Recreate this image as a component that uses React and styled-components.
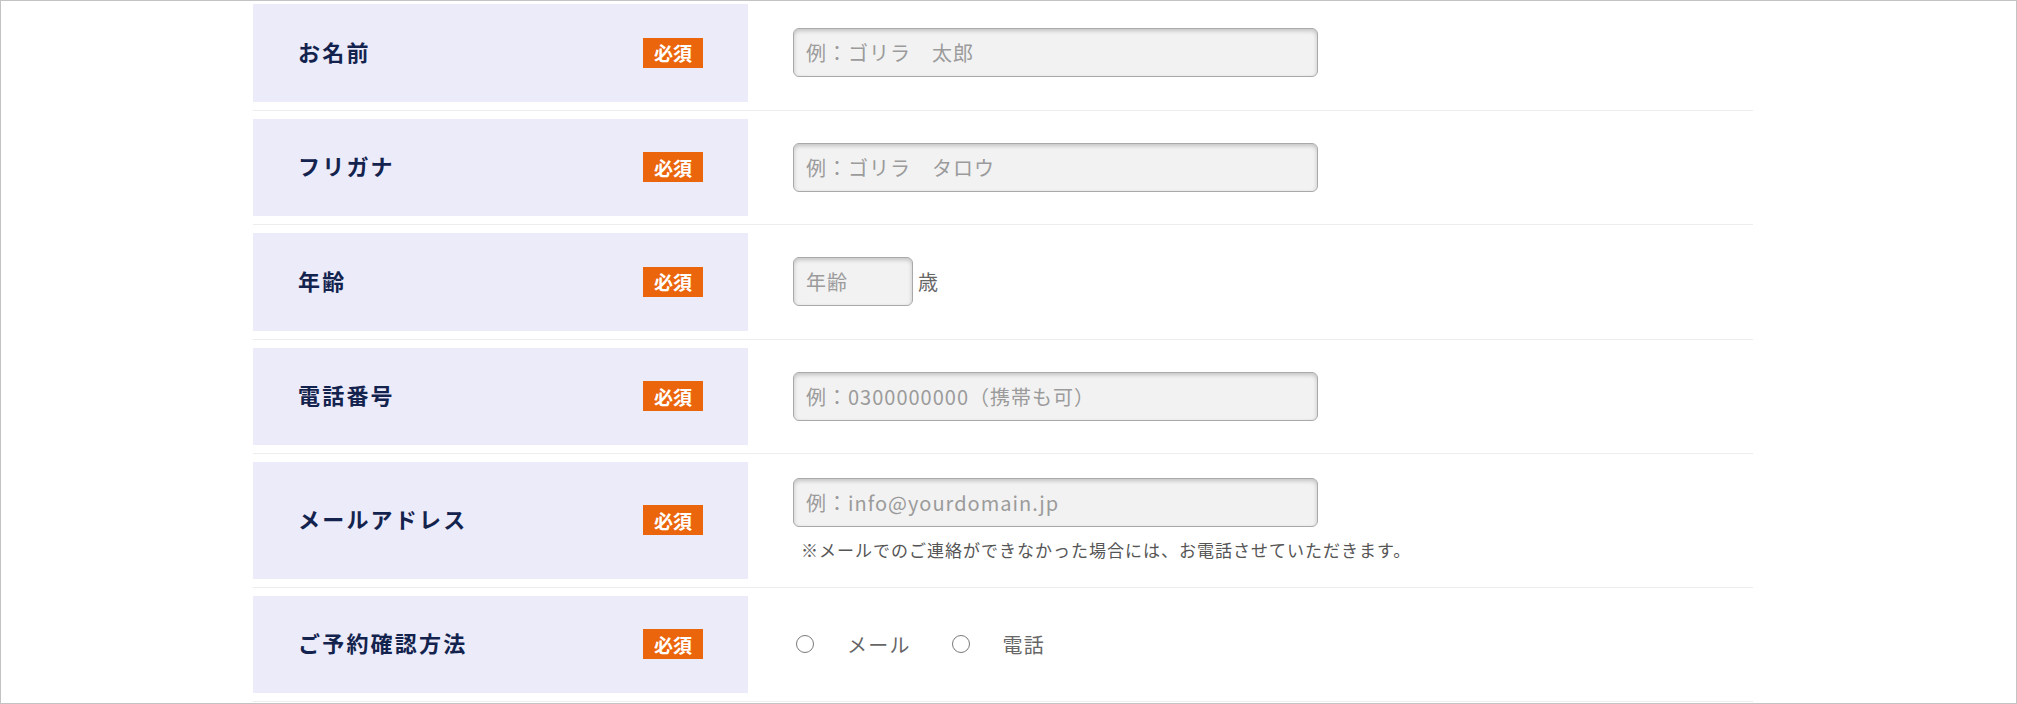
import React from 'react';
import styled, { createGlobalStyle } from 'styled-components';

const GlobalStyle = createGlobalStyle`
  html, body {
    margin: 0;
    padding: 0;
    background: #fff;
  }
  body {
    font-family: "Noto Sans CJK JP", "Noto Sans", sans-serif;
  }
  * {
    box-sizing: border-box;
  }
`;

const fields = [
  { label: 'お名前', placeholder: '例：ゴリラ　太郎' },
  { label: 'フリガナ', placeholder: '例：ゴリラ　タロウ' },
  { label: '年齢', placeholder: '年齢', kind: 'age' },
  { label: '電話番号', placeholder: '例：0300000000（携帯も可）' },
  {
    label: 'メールアドレス',
    placeholder: '例：info@yourdomain.jp',
    note: '※メールでのご連絡ができなかった場合には、お電話させていただきます。',
  },
  { label: 'ご予約確認方法', kind: 'radio', options: ['メール', '電話'] },
];

const ContactForm = () => {
  return (
    <Frame>
      <GlobalStyle />
      <Form>
        {fields.map((f) => (
          <Row key={f.label}>
            <Label>
              <LabelText>{f.label}</LabelText>
              <Required>必須</Required>
            </Label>
            <Field>
              {f.kind === 'age' && (
                <Inline>
                  <TextInput $width={120} placeholder={f.placeholder} />
                  <Unit>歳</Unit>
                </Inline>
              )}
              {f.kind === 'radio' && (
                <Inline>
                  {f.options.map((o) => (
                    <Option key={o}>
                      <Radio type="radio" name="confirm" />
                      {o}
                    </Option>
                  ))}
                </Inline>
              )}
              {!f.kind && <TextInput placeholder={f.placeholder} />}
              {f.note && <Note>{f.note}</Note>}
            </Field>
          </Row>
        ))}
      </Form>
    </Frame>
  );
};

const Frame = styled.div`
  height: 704px;
  border: 1px solid #c3c3c3;
  overflow: hidden;
`;

const Form = styled.dl`
  width: 1500px;
  margin: 0 0 0 252px;
`;

const Row = styled.div`
  display: flex;
  padding: 8px 0;
  border-bottom: 1px solid #ededed;

  &:first-child {
    padding-top: 3px;
  }
`;

const Label = styled.dt`
  width: 495px;
  min-height: 97.5px;
  flex-shrink: 0;
  display: flex;
  align-items: center;
  justify-content: space-between;
  padding: 0 45px;
  background: #ebebfa;
  color: #13234e;
  font-size: 22px;
  font-weight: 700;
  letter-spacing: 0.1em;
`;

const LabelText = styled.span`
  margin-bottom: 4px;
`;

const Required = styled.span`
  display: inline-flex;
  align-items: center;
  justify-content: center;
  width: 60px;
  height: 30px;
  background: #ea650c;
  color: #fff;
  font-size: 19px;
  font-weight: 700;
  letter-spacing: 0;
`;

const Field = styled.dd`
  flex: 1;
  margin: 0;
  padding: 16px 0 16px 45px;
  display: flex;
  flex-direction: column;
  justify-content: center;
  color: #555;
`;

const TextInput = styled.input`
  width: ${(p) => p.$width || 525}px;
  height: 49px;
  padding: 0 12px;
  border: 1px solid #a9a9a9;
  border-radius: 6px;
  background: #f2f2f2;
  box-shadow: inset 0 2px 4px rgba(0, 0, 0, 0.2);
  font-family: inherit;
  font-size: 20px;
  letter-spacing: 0.05em;
  color: #333;
  outline: none;

  &::placeholder {
    color: #9b9b9b;
  }
`;

const Inline = styled.div`
  display: flex;
  align-items: center;
`;

const Unit = styled.span`
  margin-left: 5px;
  font-size: 20px;
  color: #666;
`;

const Option = styled.label`
  display: flex;
  align-items: center;
  margin-right: 38px;
  font-size: 20px;
  letter-spacing: 0.06em;
  color: #666;
`;

const Radio = styled.input`
  appearance: none;
  width: 18px;
  height: 18px;
  margin: 0 33px 0 3px;
  border: 1px solid #7a7a7a;
  border-radius: 50%;
  background: #fff;
`;

const Note = styled.p`
  margin: 10px 0 0;
  padding-left: 8px;
  font-size: 17px;
  letter-spacing: 1px;
  line-height: 1.5;
  color: #555;
`;

export default ContactForm;
